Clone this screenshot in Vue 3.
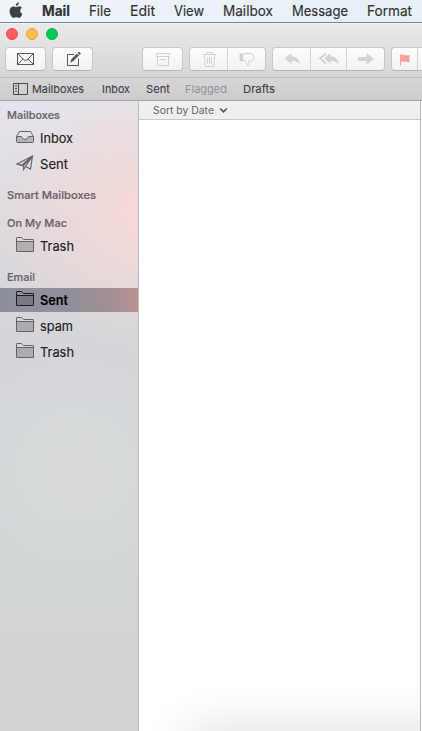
<script setup>
const menus = [
  { label: 'Mail', width: 28 },
  { label: 'File', width: 22 },
  { label: 'Edit', width: 25 },
  { label: 'View', width: 30 },
  { label: 'Mailbox', width: 50 },
  { label: 'Message', width: 56 },
  { label: 'Format', width: 45 },
]
const favorites = [
  { label: 'Mailboxes', width: 52, gap: 18 },
  { label: 'Inbox', width: 28, gap: 16 },
  { label: 'Sent', width: 24, gap: 15 },
  { label: 'Flagged', width: 42, gap: 16, dim: true },
  { label: 'Drafts', width: 32, gap: 0 },
]
const sections = [
  { title: 'Mailboxes', width: 53, rows: [{ label: 'Inbox', icon: 'inbox', width: 33 }, { label: 'Sent', icon: 'plane', width: 28 }] },
  { title: 'Smart Mailboxes', width: 89, rows: [] },
  { title: 'On My Mac', width: 60, rows: [{ label: 'Trash', icon: 'folder', width: 34 }] },
  {
    title: 'Email', width: 28,
    rows: [
      { label: 'Sent', icon: 'folder', selected: true, width: 28 },
      { label: 'spam', icon: 'folder', width: 33 },
      { label: 'Trash', icon: 'folder', width: 34 },
    ],
  },
]
</script>

<template>
  <div class="screen">
    <header class="menubar">
      <svg class="apple" width="14" height="17" viewBox="0 0 14 17">
        <path d="M9.9 0.3C10 2.3 8.5 4 6.8 4 6.6 2.2 8.2.5 9.9.3ZM12.900 5.800C10.400 7.300 10.800 10.600 13.400 11.700 12.800 13.600 11.500 15.900 10 15.900 9 15.900 8.700 15.300 7.300 15.300S5.500 15.900 4.700 15.900C2.700 15.900.6 12.200.6 9.100.6 6 2.500 4.500 4.400 4.500 5.500 4.500 6.400 5.200 7.100 5.200S8.900 4.300 10.300 4.300C11.300 4.300 12.300 4.900 12.900 5.800Z" />
      </svg>
      <svg v-for="(m, i) in menus" :key="m.label" class="txt menu" :class="{ bold: i === 0 }" :width="m.width" height="20">
        <text x="0" y="15" :textLength="m.width" lengthAdjust="spacingAndGlyphs">{{ m.label }}</text>
      </svg>
    </header>

    <div class="toolbar">
      <div class="lights"><i class="red"></i><i class="amber"></i><i class="green"></i></div>
      <div class="buttons">
        <button class="group single">
          <svg width="18" height="14" viewBox="0 0 18 14" class="dark"><rect x=".5" y="1.500" width="16" height="11" /><path d="M.5 1.500 7 7.800Q8.500 9 10 7.800L16.500 1.500M.5 12.500 6 7M16.500 12.500 11 7" /></svg>
        </button>
        <button class="group single compose">
          <svg width="16" height="16" viewBox="0 0 16 16" class="dark"><path d="M9 3.500H2.500V14.500H13.500V7.500" /><path class="solid" d="M5.300 11.400 6.200 8.300 12 2.500 14 4.500 8.200 10.300ZM12.600 1.900 14 .5 16 2.500 14.600 3.900Z" /></svg>
        </button>
        <button class="group single archive">
          <svg width="15" height="14" viewBox="0 0 15 14" class="pale"><rect x="1.500" y="1.500" width="13" height="3" /><path d="M2.500 4.500V13.500H13.500V4.500M5 7.500H11" /></svg>
        </button>
        <div class="group">
          <button class="w37">
            <svg width="14" height="16" viewBox="0 0 14 16" class="pale"><path d="M1 3.500H14M4.500 3.500V2Q4.500 1.500 5 1.500H10Q10.500 1.500 10.500 2V3.500M2.500 4 3 14.500Q3 15.500 4 15.500H11Q12 15.500 12 14.500L12.500 4M5.500 6V13M7.500 6V13M9.500 6V13" /></svg>
          </button>
          <button class="w38">
            <svg width="16" height="16" viewBox="0 0 16 16" class="pale"><path class="solid" d="M.5 2.500H4V10H.5Z" /><path d="M3.500 3.500 6 2.500H12.500Q14 2.700 13.800 4 15 5 14.500 6.500 15.300 7.800 14 8.700 14 10 12.500 10H9.700L10.200 13.500Q9.800 15.300 8.700 14.700L8 12.300 5.500 9.500H3.500" /></svg>
          </button>
        </div>
        <div class="group">
          <button class="w37">
            <svg class="reply" width="18" height="14" viewBox="0 0 18 14"><path d="M1.500 6.300 8.500 1V4.300C14 4.500 16.500 8 17 13 15 10 12.500 8.700 8.500 8.700V12Z" /></svg>
          </button>
          <button class="w36">
            <svg class="reply" width="22" height="14" viewBox="0 0 22 14"><path d="M6 6.300 12.500 1V4.300C18 4.500 20.500 8 21 13 19 10 16.500 8.700 12.500 8.700V12Z" /><path class="chev" d="M8 1.500 2.200 6.300 8 11.500" /></svg>
          </button>
          <button class="w38">
            <svg class="reply" width="18" height="14" viewBox="0 0 18 14"><path d="M1 5H9.500V1L17 7 9.500 12.500V9H1Z" /></svg>
          </button>
        </div>
        <div class="group">
          <button class="w25">
            <svg width="12" height="13" viewBox="0 0 12 13" class="flag"><path d="M1 1.500H2V2C5 .5 6.500 3.500 10.500 2V9C7 10 5 7.500 2 9V12.500H1Z" /></svg>
          </button>
          <button class="w20"></button>
        </div>
      </div>
    </div>

    <nav class="favorites">
      <svg class="panel" width="15" height="12" viewBox="0 0 15 12"><path d="M.5.5H14.500V11.500H.5ZM5.500.5V11.500M2 3H4M2 5.500H4M2 8H4" /></svg>
      <svg v-for="f in favorites" :key="f.label" class="txt fav" :class="{ dim: f.dim }" :width="f.width" height="16" :style="{ marginRight: f.gap + 'px' }">
        <text x="0" y="12" :textLength="f.width" lengthAdjust="spacingAndGlyphs">{{ f.label }}</text>
      </svg>
    </nav>

    <main class="body">
      <aside class="sidebar">
        <section v-for="s in sections" :key="s.title">
          <h2><svg class="txt heading" :width="s.width" height="16"><text x="0" y="12" :textLength="s.width" lengthAdjust="spacingAndGlyphs">{{ s.title }}</text></svg></h2>
          <div v-for="r in s.rows" :key="r.label" class="row" :class="{ selected: r.selected }">
            <svg v-if="r.icon === 'inbox'" class="icon" width="18" height="18" viewBox="0 0 18 18"><path class="tint" d="M.5 8.500H5.500Q6.500 11.500 9 11.500T12.500 8.500H17.500V14.500H.5Z" /><path d="M.5 8.500 3.500 3.500H14.500L17.500 8.500V13.500Q17.500 14.500 16.500 14.500H1.500Q.5 14.500.5 13.500ZM.5 8.500H5.500Q6.500 11.500 9 11.500T12.500 8.500H17.500" /></svg>
            <svg v-else-if="r.icon === 'plane'" class="icon plane" width="18" height="18" viewBox="0 0 18 18"><path d="M1 10 16.500 2 14.500 15 9.500 12.500 7.500 15.500V11.500ZM7.500 11.500 16.500 2 9.500 12.500M1 10 5.500 11.500 16.500 2" /></svg>
            <svg v-else class="icon" width="18" height="18" viewBox="0 0 18 18"><path class="tint" d="M.5 5.500H17.500V15.500H.5Z" /><path d="M.5 15.500V2Q.5 1.500 1 1.500H5.500L7.500 3.500H17Q17.500 3.500 17.500 4V15.500ZM.5 5.500H17.500" /></svg>
            <svg class="txt item" :width="r.width" height="20"><text x="0" y="15" :textLength="r.width" lengthAdjust="spacingAndGlyphs">{{ r.label }}</text></svg>
          </div>
        </section>
      </aside>
      <section class="list">
        <div class="sort">
          <svg class="txt sortlabel" width="61" height="16"><text x="0" y="12" textLength="61" lengthAdjust="spacingAndGlyphs">Sort by Date</text></svg>
          <svg width="9" height="7" viewBox="0 0 9 7"><path d="M1.200 1.500 4.500 4.800 7.800 1.500" /></svg>
        </div>
        <div class="messages"></div>
      </section>
    </main>
  </div>
</template>

<style>
body {
  margin: 0;
}
</style>

<style scoped>
* {
  box-sizing: border-box;
}
.screen {
  width: 422px;
  height: 731px;
  display: flex;
  flex-direction: column;
  overflow: hidden;
  background: #fff;
  font-family: Inter, Roboto, sans-serif;
}
svg {
  display: block;
  flex: none;
}
.txt {
  overflow: visible;
}
.menubar {
  height: 23px;
  flex: none;
  display: flex;
  align-items: center;
  gap: 19px;
  padding-left: 9px;
  background: linear-gradient(90deg, #eff4f8, #e7eff7);
  border-bottom: 1px solid #71879a;
}
.apple {
  fill: #3d4045;
  margin: -2px 0 0;
}
.menu {
  font-size: 14px;
  fill: #303236;
  stroke: #303236;
  stroke-width: 0.15px;
}
.bold {
  font-weight: 700;
}
.toolbar {
  height: 55px;
  flex: none;
  background: linear-gradient(#ebe8eb, #d8d5d8);
  border-bottom: 1px solid #bfbcbf;
  border-top: 1px solid #f4f2f4;
}
.lights {
  display: flex;
  gap: 8px;
  padding: 4px 0 0 6px;
}
.lights i {
  width: 12px;
  height: 12px;
  border-radius: 50%;
  border: 1px solid #e6504d;
  background: #fd5d5b;
}
.lights .amber {
  background: #fdbb4e;
  border-color: #e5a33c;
}
.lights .green {
  background: #04ca58;
  border-color: #06b34c;
}
.buttons {
  display: flex;
  gap: 6px;
  padding: 7px 0 0 5px;
  width: 500px;
}
button {
  padding: 0;
  border: 0;
  background: none;
  height: 100%;
  display: flex;
  align-items: center;
  justify-content: center;
}
.group {
  display: flex;
  height: 24px;
  flex: none;
  border: 1px solid #c9c7c9;
  border-bottom-color: #b7b5b7;
  border-radius: 4px;
  background: linear-gradient(#fdfdfd, #f3f2f3);
}
.group button + button {
  border-left: 1px solid #d3d1d3;
}
.single {
  width: 41px;
}
.archive {
  margin-left: 43px;
}
.w38 {
  width: 38px;
}
.w37 {
  width: 37px;
}
.w36 {
  width: 36px;
}
.w25 {
  width: 25px;
}
.w20 {
  width: 20px;
}
.dark {
  fill: none;
  stroke: #5b595b;
}
.solid {
  stroke: none;
  fill: #5b595b;
}
.pale {
  fill: none;
  stroke: #d2d1d2;
}
.pale .solid {
  fill: #d2d1d2;
}
.reply {
  fill: #d4d3d4;
}
.chev {
  fill: none;
  stroke: #d4d3d4;
  stroke-width: 2;
}
.flag {
  fill: #fc9c9b;
}
.favorites {
  height: 23px;
  flex: none;
  display: flex;
  align-items: center;
  padding-left: 13px;
  background: linear-gradient(#d8d5d8, #cdcbcd);
  border-bottom: 1px solid #a5a3a5;
}
.panel {
  fill: none;
  stroke: #4b494c;
  margin-right: 4px;
}
.fav {
  font-size: 11px;
  fill: #414043;
  stroke: #414043;
  stroke-width: 0.1px;
}
.dim {
  fill: #949295;
  stroke: none;
}
.body {
  flex: 1;
  display: flex;
  min-height: 0;
}
.sidebar {
  width: 139px;
  flex: none;
  padding-top: 4px;
  border-right: 1px solid #bdbcbd;
  background:
    radial-gradient(circle 115px at 76px 374px, rgba(218, 220, 218, 0.9), rgba(217, 219, 218, 0)),
    radial-gradient(ellipse 175px 135px at 160px 112px, #f3d9d7 20%, rgba(241, 216, 215, 0) 100%),
    linear-gradient(#e4e5ec 0, #dbd9de 130px, #d5d6da 230px, #d4d6db 270px, #d3d6d9 400px, #d2d5d4 520px, #d2d4d3 100%);
}
section {
  display: flow-root;
}
section + section h2 {
  margin-top: 8px;
}
h2 {
  margin: 0;
  height: 20px;
  display: flex;
  align-items: center;
  padding-left: 7px;
}
.heading {
  font-size: 11px;
  font-weight: 500;
  fill: #6b646a;
  stroke: #6b646a;
  stroke-width: 0.2px;
}
.row {
  height: 24px;
  margin: 1px 0;
  display: flex;
  align-items: center;
  gap: 6px;
  padding-left: 16px;
}
.row + .row {
  margin-top: 2px;
}
.icon {
  fill: none;
  stroke: #686268;
  margin-top: -2px;
}
.plane {
  stroke-width: 1.2;
}
.tint {
  stroke: none;
  fill: rgba(70, 65, 70, 0.28);
}
.item {
  font-size: 13px;
  fill: #202023;
  stroke: #202023;
  stroke-width: 0.15px;
}
.selected {
  background: linear-gradient(75deg, #8c909b 0%, #918f99 50%, #a08f96 75%, #bd9191 100%);
}
.selected .item {
  fill: #000;
  font-weight: 600;
}
.selected .icon {
  stroke: #1d1c22;
}
.list {
  width: 282px;
  flex: none;
  display: flex;
  flex-direction: column;
  border-right: 1px solid #b9b9b9;
}
.sort {
  height: 19px;
  flex: none;
  display: flex;
  align-items: center;
  gap: 5px;
  padding-left: 14px;
  background: #efefef;
  border-bottom: 1px solid #c8c8c8;
}
.sort path {
  fill: none;
  stroke: #555;
  stroke-width: 1.7;
}
.sortlabel {
  font-size: 10px;
  fill: #666;
}
.messages {
  flex: 1;
  background: #fff;
  overflow: hidden;
  display: flex;
  flex-direction: column;
  justify-content: flex-end;
}
.messages::after {
  content: '';
  height: 1px;
  margin: 0 -80px -12px 60px;
  box-shadow: 0 0 44px 12px rgba(0, 0, 0, 0.17);
}
</style>
